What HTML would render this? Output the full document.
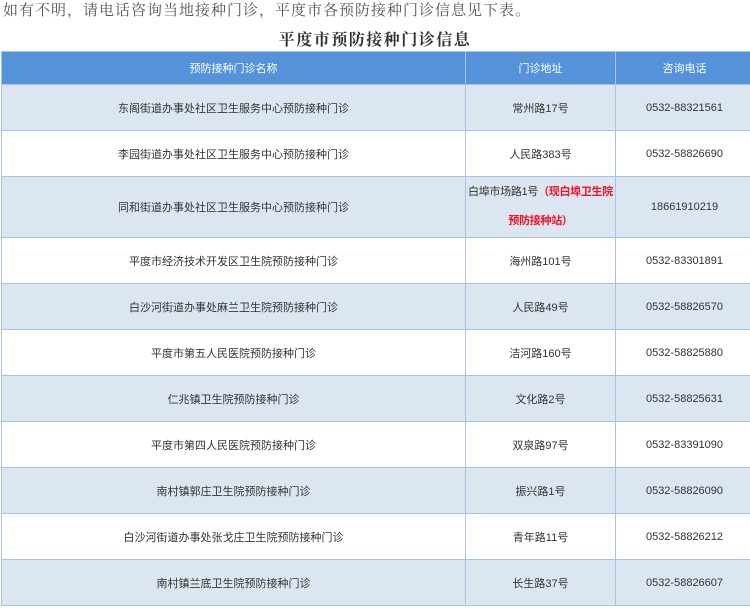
<!DOCTYPE html>
<html><head><meta charset="utf-8"><style>
body{margin:0;width:750px;height:610px;overflow:hidden;background:#fff;font-family:"Liberation Sans","Noto Sans CJK SC",sans-serif;}
.top{position:absolute;left:3px;top:0;font-family:"Noto Serif CJK SC",serif;font-size:15px;color:#555;letter-spacing:1px;line-height:20px;white-space:nowrap}
.title{position:absolute;left:0;width:750px;top:28px;text-align:center;font-family:"Noto Serif CJK SC",serif;font-weight:bold;font-size:16px;color:#333;letter-spacing:1.5px;line-height:22px}
table{position:absolute;left:1px;top:51px;border-collapse:collapse;width:752px;table-layout:fixed}
td{border:1px solid #a7c4e8;text-align:center;font-size:11px;color:#333;padding:0}
tr.h td{background:#5592d9;color:#fff;height:32px;font-size:11px}
tr.b td{background:#dce6f1}
tr td{height:45px}
.r{color:#f0122a;font-weight:bold}
</style></head><body>
<div class="top">如有不明，请电话咨询当地接种门诊，平度市各预防接种门诊信息见下表。</div>
<div class="title">平度市预防接种门诊信息</div>
<table>
<colgroup><col style="width:464px"><col style="width:150px"><col style="width:138px"></colgroup>
<tr class="h"><td>预防接种门诊名称</td><td>门诊地址</td><td>咨询电话</td></tr>
<tr class="b"><td>东阁街道办事处社区卫生服务中心预防接种门诊</td><td>常州路17号</td><td>0532-88321561</td></tr>
<tr><td>李园街道办事处社区卫生服务中心预防接种门诊</td><td>人民路383号</td><td>0532-58826690</td></tr>
<tr class="b"><td style="height:60px">同和街道办事处社区卫生服务中心预防接种门诊</td><td style="line-height:29px;white-space:nowrap;letter-spacing:-0.3px">白埠市场路1号<span class="r">（现白埠卫生院<br>预防接种站）</span></td><td>18661910219</td></tr>
<tr><td>平度市经济技术开发区卫生院预防接种门诊</td><td>海州路101号</td><td>0532-83301891</td></tr>
<tr class="b"><td>白沙河街道办事处麻兰卫生院预防接种门诊</td><td>人民路49号</td><td>0532-58826570</td></tr>
<tr><td>平度市第五人民医院预防接种门诊</td><td>洁河路160号</td><td>0532-58825880</td></tr>
<tr class="b"><td>仁兆镇卫生院预防接种门诊</td><td>文化路2号</td><td>0532-58825631</td></tr>
<tr><td>平度市第四人民医院预防接种门诊</td><td>双泉路97号</td><td>0532-83391090</td></tr>
<tr class="b"><td>南村镇郭庄卫生院预防接种门诊</td><td>振兴路1号</td><td>0532-58826090</td></tr>
<tr><td>白沙河街道办事处张戈庄卫生院预防接种门诊</td><td>青年路11号</td><td>0532-58826212</td></tr>
<tr class="b"><td>南村镇兰底卫生院预防接种门诊</td><td>长生路37号</td><td>0532-58826607</td></tr>
</table>
</body></html>
